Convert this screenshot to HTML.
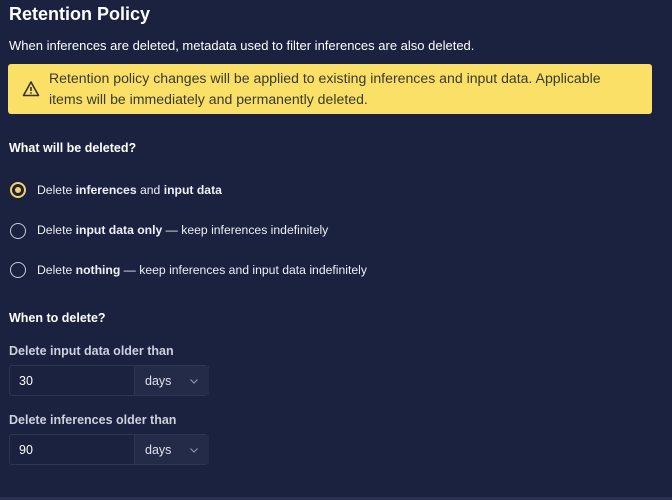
<!DOCTYPE html>
<html><head><style>
body{margin:0;width:672px;height:500px;background:#1a2240;font-family:"Liberation Sans",sans-serif;color:#fff;position:relative;overflow:hidden}
.a{position:absolute;white-space:nowrap}
h1{position:absolute;left:9px;top:4px;margin:0;font-size:18px;font-weight:bold}
.warn{position:absolute;left:8px;top:64px;width:644px;height:50px;background:#fbe067;border-radius:3px;color:#3a3a2a;font-size:14.1px;line-height:21px}
.radio{position:absolute;left:10px;width:16px;height:16px;border:1.5px solid #c8ccd6;border-radius:50%;box-sizing:border-box}
.lbl{font-size:12.2px;color:#eef0f5}
.lbl b{font-weight:bold}
.h{font-size:12.5px;font-weight:bold}
.in{position:absolute;left:9px;width:199px;height:31px;border:1px solid #2c3553;border-radius:3px;box-sizing:border-box;background:#1a2240}
.in .v{position:absolute;left:9px;top:8px;font-size:12.5px}
.in .s{position:absolute;left:124px;top:0;width:74px;height:29px;background:#232b48;border-left:1px solid #2c3553}
.in .s span{position:absolute;left:10px;top:8px;font-size:12.5px;color:#dfe2ea}
</style></head><body>
<h1>Retention Policy</h1>
<div class="a" style="left:9px;top:38px;font-size:13px">When inferences are deleted, metadata used to filter inferences are also deleted.</div>
<div class="warn">
<svg style="position:absolute;left:14px;top:16px" width="18" height="18" viewBox="0 0 18 18"><path d="M9 2L16.5 15.5H1.5Z" fill="none" stroke="#333" stroke-width="1.6" stroke-linejoin="round"/><path d="M9 7v4" stroke="#333" stroke-width="1.6"/><circle cx="9" cy="13" r="0.9" fill="#333"/></svg>
<div class="a" style="left:41px;top:4px">Retention policy changes will be applied to existing inferences and input data. Applicable</div>
<div class="a" style="left:41px;top:25px">items will be immediately and permanently deleted.</div>
</div>
<div class="a h" style="left:9px;top:141px">What will be deleted?</div>
<div class="radio" style="top:182px;border-color:#f4d35e;border-width:2px"><div style="position:absolute;left:3px;top:3px;width:6px;height:6px;border-radius:50%;background:#f4d35e"></div></div>
<div class="a lbl" style="left:37px;top:183px">Delete <b>inferences</b> and <b>input data</b></div>
<div class="radio" style="top:223px"></div>
<div class="a lbl" style="left:37px;top:223px">Delete <b>input data only</b> — keep inferences indefinitely</div>
<div class="radio" style="top:262px"></div>
<div class="a lbl" style="left:37px;top:263px">Delete <b>nothing</b> — keep inferences and input data indefinitely</div>
<div class="a h" style="left:9px;top:311px">When to delete?</div>
<div class="a h" style="left:9px;top:344px;color:#cdd1dc">Delete input data older than</div>
<div class="in" style="top:365px"><div class="v">30</div><div class="s"><span>days</span><svg style="position:absolute;left:55px;top:13px" width="8" height="5"><path d="M0.5 0.5L4 4L7.5 0.5" fill="none" stroke="#8a90a4" stroke-width="1.2"/></svg></div></div>
<div class="a h" style="left:9px;top:413px;color:#cdd1dc">Delete inferences older than</div>
<div class="in" style="top:434px"><div class="v">90</div><div class="s"><span>days</span><svg style="position:absolute;left:55px;top:13px" width="8" height="5"><path d="M0.5 0.5L4 4L7.5 0.5" fill="none" stroke="#8a90a4" stroke-width="1.2"/></svg></div></div>
<div style="position:absolute;left:0;top:497px;width:672px;height:3px;background:#2a3150"></div>
</body></html>
